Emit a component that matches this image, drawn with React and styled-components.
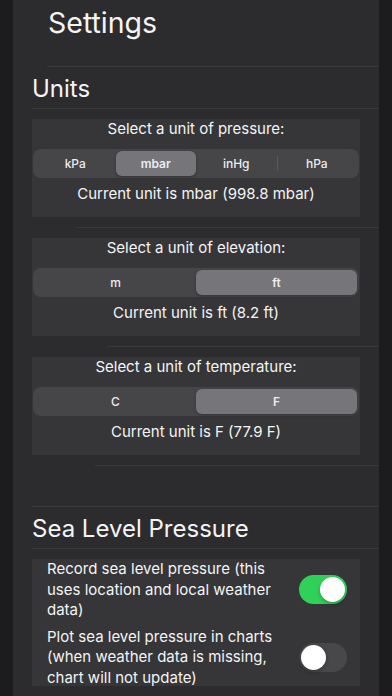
import React, { useState } from "react";
import styled, { createGlobalStyle } from "styled-components";

const GlobalStyle = createGlobalStyle`
  html, body {
    margin: 0;
    padding: 0;
    background: #1c1c1e;
    overflow: hidden;
  }
  body {
    font-family: "Inter", "Liberation Sans", sans-serif;
    color: #f4f4f5;
    -webkit-font-smoothing: antialiased;
  }
`;

const units = [
  {
    label: "Select a unit of pressure:",
    options: ["kPa", "mbar", "inHg", "hPa"],
    selected: 1,
    value: "998.8",
    inset: 63,
  },
  {
    label: "Select a unit of elevation:",
    options: ["m", "ft"],
    selected: 1,
    value: "8.2",
    inset: 94,
  },
  {
    label: "Select a unit of temperature:",
    options: ["C", "F"],
    selected: 1,
    value: "77.9",
    inset: 82,
  },
];

function Segmented({ options, selected }) {
  return (
    <Track>
      {options.map((opt, i) => {
        const showDivider =
          i > 0 && i !== selected && i - 1 !== selected;
        return (
          <Segment key={opt} $active={i === selected} $divider={showDivider}>
            {opt}
          </Segment>
        );
      })}
    </Track>
  );
}

function Toggle({ on }) {
  return (
    <SwitchTrack $on={on}>
      <Knob $on={on} />
    </SwitchTrack>
  );
}

export default function App() {
  const [record] = useState(true);
  const [plot] = useState(false);

  return (
    <>
      <GlobalStyle />
      <Page>
        <Panel>
          <Title>Settings</Title>
          <Separator $inset={34} />
          <SectionHeader>Units</SectionHeader>
          <Separator $inset={19} />
          {units.map((u) => {
            const unit = u.options[u.selected];
            return (
              <React.Fragment key={u.label}>
                <Card>
                  <Label>{u.label}</Label>
                  <Segmented options={u.options} selected={u.selected} />
                  <Current>
                    Current unit is {unit} ({u.value} {unit})
                  </Current>
                </Card>
                <Separator $inset={u.inset} $spaced />
              </React.Fragment>
            );
          })}
          <Spacer />
          <Separator $inset={19} />
          <SectionHeader>Sea Level Pressure</SectionHeader>
          <Separator $inset={19} />
          <ToggleCard>
            <ToggleRow>
              <ToggleText>
                Record sea level pressure (this uses location and local
                weather data)
              </ToggleText>
              <Toggle on={record} />
            </ToggleRow>
            <ToggleRow>
              <ToggleText>
                Plot sea level pressure in charts (when weather data is
                missing, chart will not update)
              </ToggleText>
              <Toggle on={plot} />
            </ToggleRow>
          </ToggleCard>
          <Separator $inset={34} $spaced />
        </Panel>
      </Page>
    </>
  );
}

const Page = styled.div`
  height: 696px;
  display: flex;
  padding: 0 13px;
  background: #1c1c1e;
`;

const Panel = styled.div`
  flex: 1;
  background: #2c2c2e;
  display: flex;
  flex-direction: column;
  overflow: hidden;
  & > * {
    flex-shrink: 0;
  }
`;

const Title = styled.h1`
  margin: 0;
  height: 66px;
  padding: 3px 0 0 35px;
  box-sizing: border-box;
  font-size: 28.5px;
  font-weight: 400;
  line-height: 40px;
`;

const Separator = styled.div`
  height: 1px;
  margin-left: ${(p) => p.$inset}px;
  margin-top: ${(p) => (p.$spaced ? "10px" : "0")};
  background: #38383a;
`;

const SectionHeader = styled.h2`
  margin: 0;
  height: 41px;
  padding-left: 19px;
  font-size: 24px;
  font-weight: 400;
  line-height: 43px;
`;

const Card = styled.div`
  margin: 10px 19px 0;
  height: 98px;
  box-sizing: border-box;
  background: #363638;
  display: flex;
  flex-direction: column;
  align-items: stretch;
`;

const Label = styled.div`
  height: 20px;
  font-size: 15px;
  line-height: 20px;
  text-align: center;
`;

const Track = styled.div`
  margin: 10px 1px 0;
  height: 29px;
  border-radius: 8px;
  background: #464649;
  display: flex;
  padding: 2px;
  box-sizing: border-box;
`;

const Segment = styled.div`
  flex: 1;
  position: relative;
  display: flex;
  align-items: center;
  justify-content: center;
  font-size: 12px;
  font-weight: ${(p) => (p.$active ? 600 : 500)};
  color: #ececee;
  border-radius: 6px;
  background: ${(p) => (p.$active ? "#75757a" : "transparent")};
  box-shadow: ${(p) => (p.$active ? "0 1px 3px rgba(0,0,0,0.25)" : "none")};
  &::before {
    content: "";
    display: ${(p) => (p.$divider ? "block" : "none")};
    position: absolute;
    left: 0;
    top: 5px;
    bottom: 5px;
    width: 1px;
    background: #5a5a5e;
  }
`;

const Current = styled.div`
  margin-top: 6px;
  font-size: 15px;
  line-height: 20px;
  text-align: center;
`;

const Spacer = styled.div`
  height: 40px;
`;

const ToggleCard = styled.div`
  margin: 10px 19px 0;
  height: 127px;
  background: #363638;
  display: flex;
  flex-direction: column;
  gap: 6px;
`;

const ToggleRow = styled.div`
  display: flex;
  align-items: center;
  padding: 0 13px 0 15px;
`;

const ToggleText = styled.div`
  flex: 1;
  font-size: 15px;
  line-height: 20.5px;
  padding-right: 20px;
`;

const SwitchTrack = styled.div`
  width: 48px;
  height: 29px;
  border-radius: 15px;
  flex-shrink: 0;
  background: ${(p) => (p.$on ? "#30d158" : "#48484b")};
  display: flex;
  align-items: center;
  justify-content: ${(p) => (p.$on ? "flex-end" : "flex-start")};
  padding: 2px;
  box-sizing: border-box;
`;

const Knob = styled.div`
  width: 25px;
  height: 25px;
  border-radius: 50%;
  background: #ffffff;
  box-shadow: 0 2px 4px rgba(0, 0, 0, 0.25);
`;
